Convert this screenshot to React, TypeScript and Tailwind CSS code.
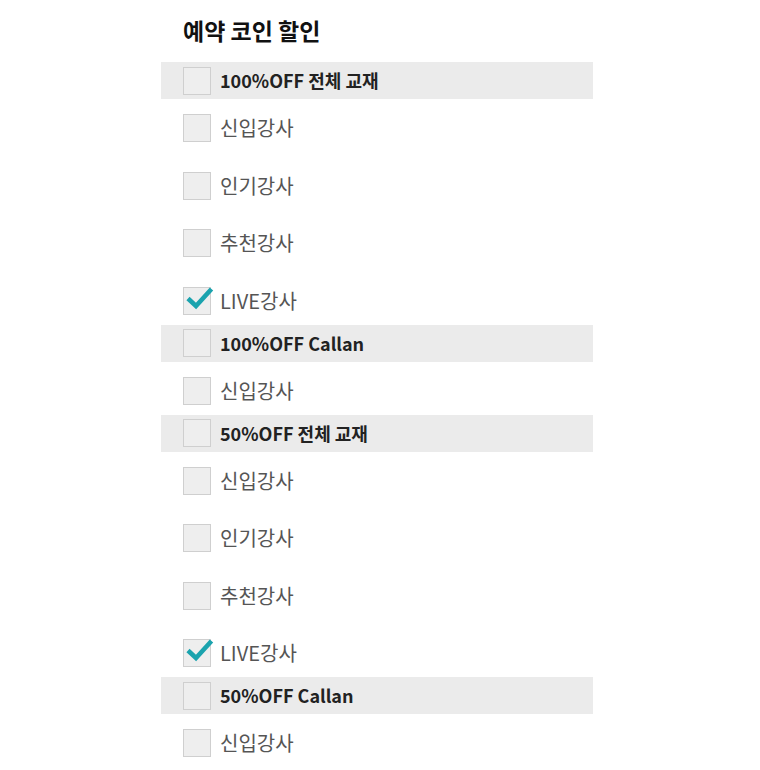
import React from 'react';

type Group = {
  title: string;
  items: { label: string; checked?: boolean }[];
};

const groups: Group[] = [
  {
    title: '100%OFF 전체 교재',
    items: [
      { label: '신입강사' },
      { label: '인기강사' },
      { label: '추천강사' },
      { label: 'LIVE강사', checked: true },
    ],
  },
  { title: '100%OFF Callan', items: [{ label: '신입강사' }] },
  {
    title: '50%OFF 전체 교재',
    items: [
      { label: '신입강사' },
      { label: '인기강사' },
      { label: '추천강사' },
      { label: 'LIVE강사', checked: true },
    ],
  },
  { title: '50%OFF Callan', items: [{ label: '신입강사' }] },
];

function Box({ checked }: { checked?: boolean }) {
  return (
    <span className="relative block w-[28px] h-[28px] shrink-0 bg-[#eeeeee] border-[1.5px] border-[#cfcfcf]">
      {checked && (
        <svg
          className="absolute left-0 top-0 overflow-visible"
          width="28"
          height="28"
          viewBox="0 0 28 28"
          fill="none"
        >
          <path
            d="M4 10.5 L12 18 L27.5 1"
            stroke="#1ba3ae"
            strokeWidth="4.6"
            strokeLinecap="butt"
            strokeLinejoin="miter"
          />
        </svg>
      )}
    </span>
  );
}

export default function App() {
  return (
    <div
      className="w-[760px] h-[770px] bg-white overflow-hidden"
      style={{ fontFamily: '"Noto Sans CJK KR", "Noto Sans", sans-serif' }}
    >
      <div className="ml-[161px] w-[432px]">
        <h2 className="pt-[14px] pl-[22px] mb-[16px] text-[23px] leading-[32px] font-bold text-[#111]">
          예약 코인 할인
        </h2>

        {groups.map((g, gi) => (
          <div key={gi}>
            <label className="flex items-center h-[37px] pl-[22px] bg-[#ebebeb]">
              <Box />
              <span className="ml-[9px] text-[18px] font-bold text-[#222]">
                {g.title}
              </span>
            </label>
            <ul className="flex flex-col gap-[29.5px] pt-[15px] pb-[10px] pl-[22px]">
              {g.items.map((it, ii) => (
                <li key={ii} className="flex items-center h-[28px]">
                  <Box checked={it.checked} />
                  <span className="ml-[9px] text-[20px] text-[#555]">{it.label}</span>
                </li>
              ))}
            </ul>
          </div>
        ))}
      </div>
    </div>
  );
}
